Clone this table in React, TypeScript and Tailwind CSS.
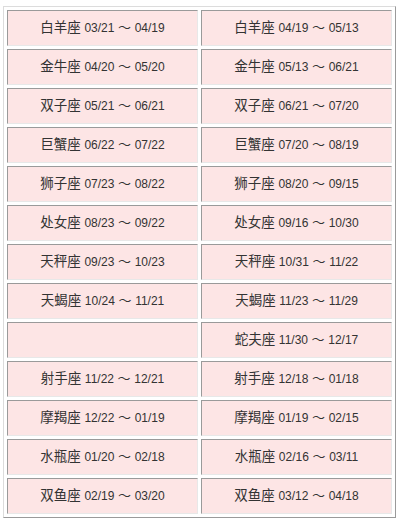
import React from "react";

const rows: [string, string][] = [
  ["白羊座 03/21 ～ 04/19", "白羊座 04/19 ～ 05/13"],
  ["金牛座 04/20 ～ 05/20", "金牛座 05/13 ～ 06/21"],
  ["双子座 05/21 ～ 06/21", "双子座 06/21 ～ 07/20"],
  ["巨蟹座 06/22 ～ 07/22", "巨蟹座 07/20 ～ 08/19"],
  ["狮子座 07/23 ～ 08/22", "狮子座 08/20 ～ 09/15"],
  ["处女座 08/23 ～ 09/22", "处女座 09/16 ～ 10/30"],
  ["天秤座 09/23 ～ 10/23", "天秤座 10/31 ～ 11/22"],
  ["天蝎座 10/24 ～ 11/21", "天蝎座 11/23 ～ 11/29"],
  ["", "蛇夫座 11/30 ～ 12/17"],
  ["射手座 11/22 ～ 12/21", "射手座 12/18 ～ 01/18"],
  ["摩羯座 12/22 ～ 01/19", "摩羯座 01/19 ～ 02/15"],
  ["水瓶座 01/20 ～ 02/18", "水瓶座 02/16 ～ 03/11"],
  ["双鱼座 02/19 ～ 03/20", "双鱼座 03/12 ～ 04/18"],
];

function Cell({ text }: { text: string }) {
  const parts = text ? text.split(" ") : [];
  return (
    <td className="h-[36px] w-[191px] border border-t-[#9a9a9a] border-l-[#9a9a9a] border-r-[#e8e8e8] border-b-[#e8e8e8] bg-[#fde5e5] p-0 text-center align-middle text-[13px] text-[#333333]">
      {text && (
        <>
          <span className="text-[13.5px]">{parts[0]}</span>{" "}
          <span className="text-[12px]">{parts[1]}</span>{" "}
          <span className="text-[13px]">{parts[2]}</span>{" "}
          <span className="text-[12px]">{parts[3]}</span>
        </>
      )}
    </td>
  );
}

export default function App() {
  return (
    <div className="min-h-[522px] w-[400px] bg-white pl-[3px] pt-[6px] [font-family:'Liberation_Sans','Noto_Sans_CJK_SC',sans-serif]">
      <table className="w-[393px] border-separate border-spacing-[3px] border border-t-[#dcdcdc] border-l-[#dcdcdc] border-r-[#9a9a9a] border-b-[#9a9a9a]">
        <tbody>
          {rows.map((r, i) => (
            <tr key={i}>
              <Cell text={r[0]} />
              <Cell text={r[1]} />
            </tr>
          ))}
        </tbody>
      </table>
    </div>
  );
}
